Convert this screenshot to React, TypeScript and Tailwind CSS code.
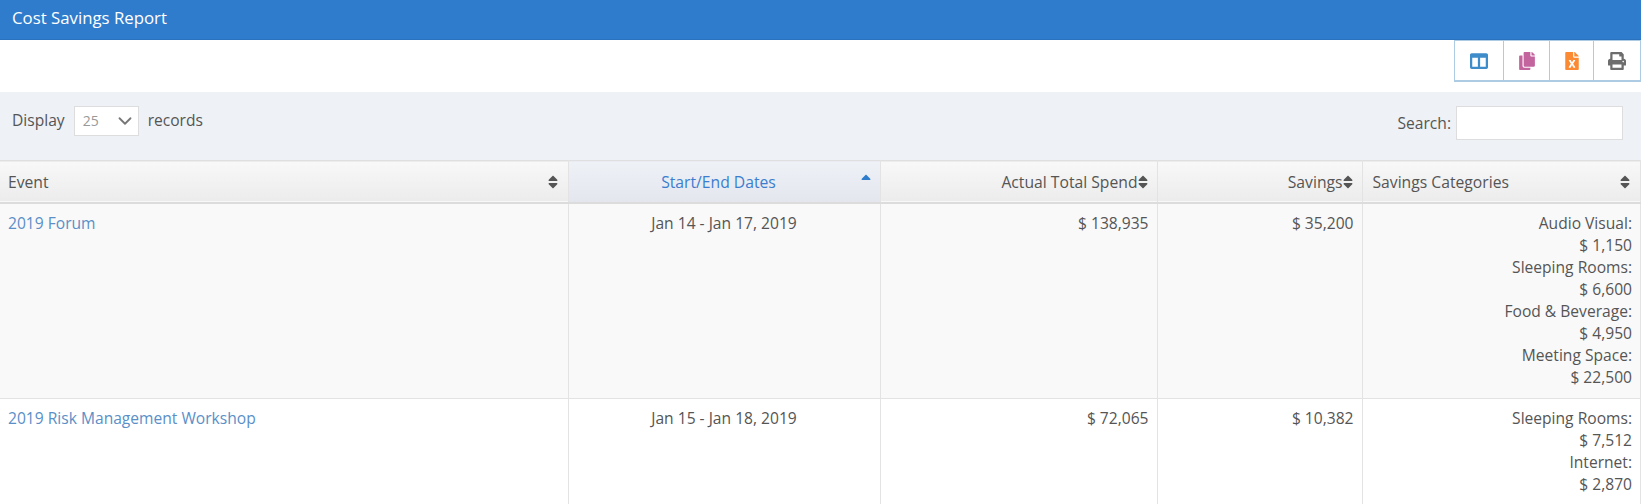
import { FaColumns, FaCopy, FaFileExcel, FaPrint, FaSort, FaSortUp } from "react-icons/fa";
import { ChevronDown } from "lucide-react";

const tools = [
  { icon: <FaColumns size={18} className="text-[#3f8ccb]" />, w: "w-[49px]" },
  { icon: <FaCopy size={18} className="text-[#c4649f]" />, w: "w-[46px]" },
  { icon: <FaFileExcel size={18} className="text-[#fb8a32]" />, w: "w-[44px]" },
  { icon: <FaPrint size={18} className="text-[#6d6d6d]" />, w: "w-[47px]" },
];

const rows = [
  {
    name: "2019 Forum",
    dates: "Jan 14 - Jan 17, 2019",
    spend: "$ 138,935",
    savings: "$ 35,200",
    cats: ["Audio Visual:", "$ 1,150", "Sleeping Rooms:", "$ 6,600", "Food & Beverage:", "$ 4,950", "Meeting Space:", "$ 22,500"],
    bg: "bg-[#f9f9f9]",
  },
  {
    name: "2019 Risk Management Workshop",
    dates: "Jan 15 - Jan 18, 2019",
    spend: "$ 72,065",
    savings: "$ 10,382",
    cats: ["Sleeping Rooms:", "$ 7,512", "Internet:", "$ 2,870"],
    bg: "bg-white",
  },
];

const th = "h-[42px] border-r border-[#e3e3e3] px-2 pt-[2px] text-[15.7px] font-medium";
const td = "border-r border-b border-[#e3e3e3] px-2 pt-[8px] pb-[10px] align-top";

function SortIcon() {
  return <FaSort className="h-[16px] w-[10px] shrink-0 text-[#555]" />;
}

export default function App() {
  return (
    <div className="h-[504px] overflow-hidden bg-white font-['Open_Sans',sans-serif] text-[15.6px] leading-[22px] text-[#555]">
      <div className="flex h-[40px] items-center border-b border-[#2a72bd] bg-[#2f7ccc] px-3 pb-[3px] text-[16.8px] text-white">
        Cost Savings Report
      </div>

      <div className="flex h-[52px] justify-end bg-white">
        <div className="flex h-[42px] border-2 border-r-0 border-t-[1px] border-[#aecbe4] border-l-[1px]">
          {tools.map((t, i) => (
            <button key={i} className={`flex items-center justify-center border-r-[1px] border-[#aecbe4] ${t.w}`}>
              {t.icon}
            </button>
          ))}
        </div>
      </div>

      <div className="flex h-[68px] items-start justify-between bg-[#eef1f6] pr-[18px] pl-3 pt-[14px]">
        <div className="flex items-center">
          <span className="-mt-[3px]">Display</span>
          <div className="ml-[9px] flex h-[30px] w-[65px] items-center justify-between border border-[#dddddd] bg-white pr-[2px] pl-2 text-[14px] text-[#999]">
            25
            <ChevronDown size={22} className="text-[#777]" />
          </div>
          <span className="ml-[9px] -mt-[3px]">records</span>
        </div>
        <div className="flex items-center gap-[5px]">
          <span>Search:</span>
          <input className="h-[34px] w-[167px] border border-[#dddddd] bg-white" />
        </div>
      </div>

      <table className="w-full table-fixed border-collapse">
        <colgroup>
          <col className="w-[568px]" />
          <col className="w-[312px]" />
          <col className="w-[277px]" />
          <col className="w-[205px]" />
          <col />
        </colgroup>
        <thead>
          <tr className="border-t border-b-[2px] border-t-[#dfdfdf] border-b-[#dcdcdc] bg-gradient-to-b from-[#f8f8f8] to-[#ececec]">
            <th className={th}>
              <div className="flex items-center justify-between pr-[2px]">
                Event <SortIcon />
              </div>
            </th>
            <th className={`${th} bg-gradient-to-b from-[#eef1f6] to-[#e3e6ed] text-[#3b7ed0]`}>
              <div className="relative pr-[11px] text-center">
                Start/End Dates
                <FaSortUp className="absolute top-[2px] right-[1px] h-[16px] w-[10px] text-[#2f7ccc]" />
              </div>
            </th>
            <th className={th}>
              <div className="flex items-center justify-end pr-[1px]">
                Actual Total Spend
                <SortIcon />
              </div>
            </th>
            <th className={th}>
              <div className="flex items-center justify-end pr-[1px]">
                Savings
                <SortIcon />
              </div>
            </th>
            <th className={th}>
              <div className="flex items-center justify-between pr-[2px] pl-[2px]">
                Savings Categories <SortIcon />
              </div>
            </th>
          </tr>
        </thead>
        <tbody>
          {rows.map((r) => (
            <tr key={r.name} className={r.bg}>
              <td className={td}>
                <a className="text-[#5a8fc8]">{r.name}</a>
              </td>
              <td className={`${td} text-center`}>{r.dates}</td>
              <td className={`${td} text-right`}>{r.spend}</td>
              <td className={`${td} text-right`}>{r.savings}</td>
              <td className={`${td} text-right`}>
                {r.cats.map((c) => (
                  <div key={c}>{c}</div>
                ))}
              </td>
            </tr>
          ))}
        </tbody>
      </table>
    </div>
  );
}
